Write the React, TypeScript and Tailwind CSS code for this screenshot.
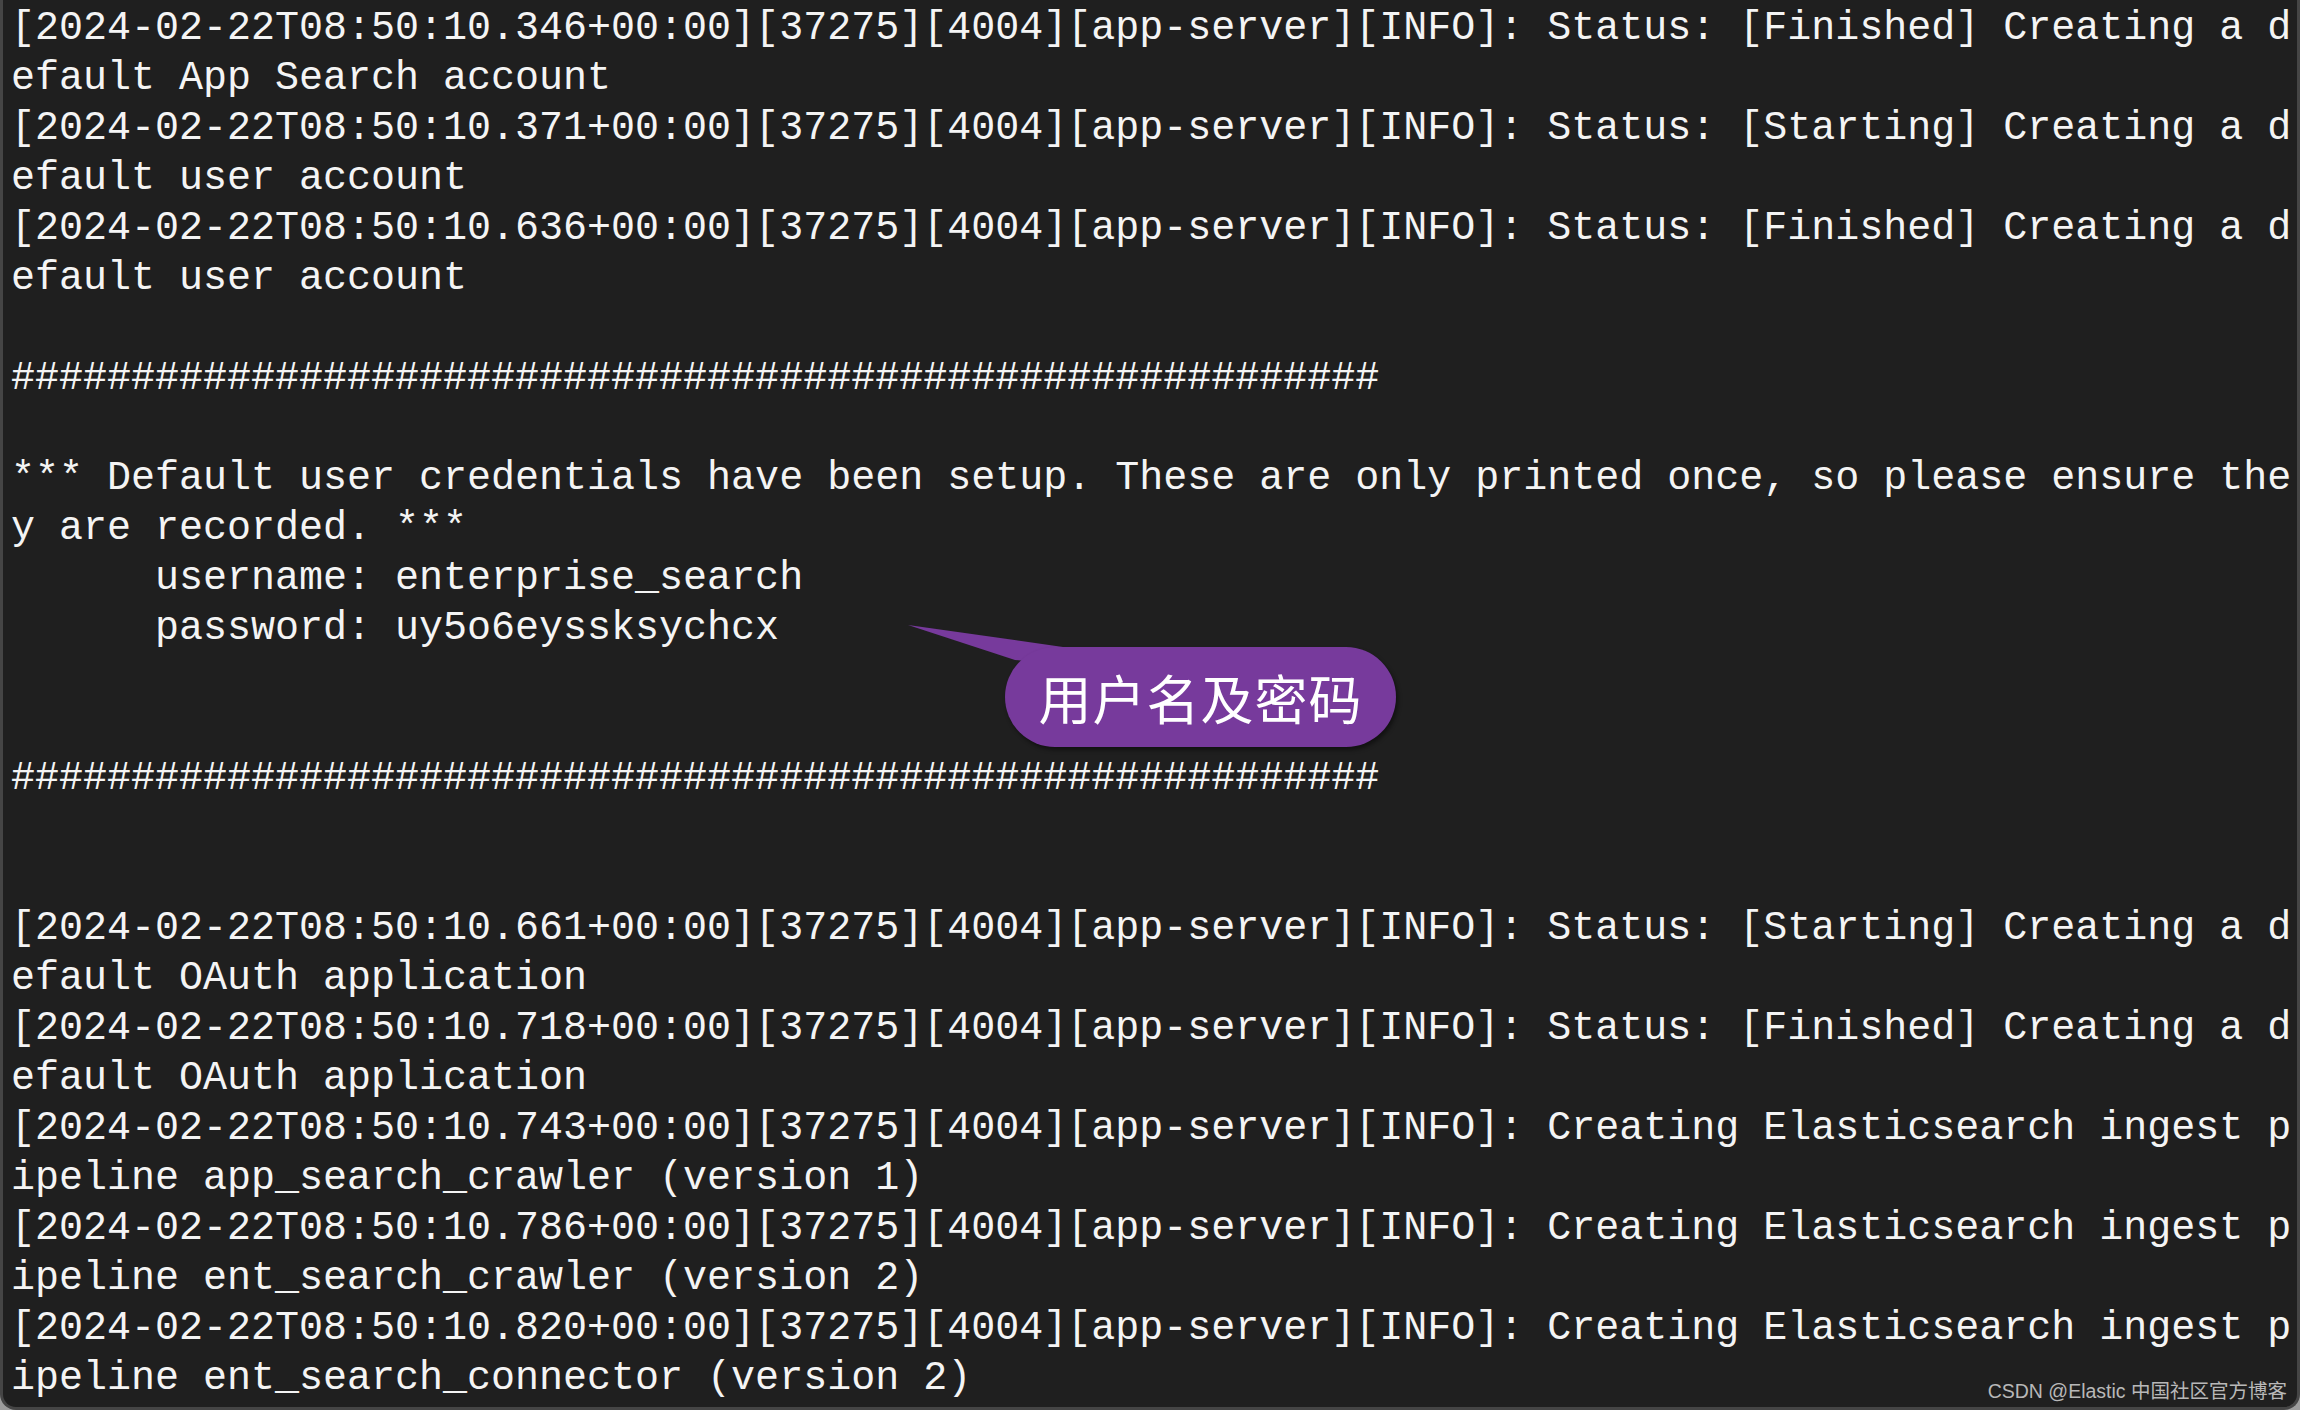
import React from "react";

const HASHES = "#".repeat(57);

const lines: string[] = [
	"[2024-02-22T08:50:10.346+00:00][37275][4004][app-server][INFO]: Status: [Finished] Creating a d",
	"efault App Search account",
	"[2024-02-22T08:50:10.371+00:00][37275][4004][app-server][INFO]: Status: [Starting] Creating a d",
	"efault user account",
	"[2024-02-22T08:50:10.636+00:00][37275][4004][app-server][INFO]: Status: [Finished] Creating a d",
	"efault user account",
	"",
	HASHES,
	"",
	"*** Default user credentials have been setup. These are only printed once, so please ensure the",
	"y are recorded. ***",
	"      username: enterprise_search",
	"      password: uy5o6eyssksychcx",
	"",
	"",
	HASHES,
	"",
	"",
	"[2024-02-22T08:50:10.661+00:00][37275][4004][app-server][INFO]: Status: [Starting] Creating a d",
	"efault OAuth application",
	"[2024-02-22T08:50:10.718+00:00][37275][4004][app-server][INFO]: Status: [Finished] Creating a d",
	"efault OAuth application",
	"[2024-02-22T08:50:10.743+00:00][37275][4004][app-server][INFO]: Creating Elasticsearch ingest p",
	"ipeline app_search_crawler (version 1)",
	"[2024-02-22T08:50:10.786+00:00][37275][4004][app-server][INFO]: Creating Elasticsearch ingest p",
	"ipeline ent_search_crawler (version 2)",
	"[2024-02-22T08:50:10.820+00:00][37275][4004][app-server][INFO]: Creating Elasticsearch ingest p",
	"ipeline ent_search_connector (version 2)",
];

function Callout() {
	return (
		<div className="absolute left-[900px] top-[620px] w-[500px] h-[135px]">
			{/* tail pointing at the password */}
			<svg className="absolute left-0 top-0" width="200" height="60" viewBox="0 0 200 60">
				<polygon points="5,5 160,27 150,44 112,40" fill="#773a9c" />
			</svg>
			<div className="absolute left-[102px] top-[27px] w-[391px] h-[100px] rounded-full bg-[#773a9c] shadow-[2px_3px_4px_rgba(0,0,0,0.45)] flex items-center justify-center">
				<span className="text-white text-[53px] leading-none font-['Noto_Sans_CJK_SC',sans-serif] tracking-[1px]">
					用户名及密码
				</span>
			</div>
		</div>
	);
}

export default function App() {
	return (
		<div className="w-[2300px] h-[1410px] bg-[#9d9d9d] overflow-hidden">
			<div className="relative w-full h-full bg-[#1f1f1f] rounded-b-[16px] border-x-[3px] border-b-[3px] border-[#454545] overflow-hidden">
				<div className="pl-[8px] pt-[4px] font-['Liberation_Mono',monospace] text-[40px] leading-[50px] text-[#f4f4f4] whitespace-pre">
					{lines.map((line, i) => (
						<div key={i} className="h-[50px]">
							{line}
						</div>
					))}
				</div>

				<Callout />

				<div className="absolute right-[10px] bottom-[6px] text-[19.5px] leading-none text-[#b8b8b8] font-['Liberation_Sans','Noto_Sans_CJK_SC',sans-serif]">
					CSDN @Elastic 中国社区官方博客
				</div>
			</div>
		</div>
	);
}
